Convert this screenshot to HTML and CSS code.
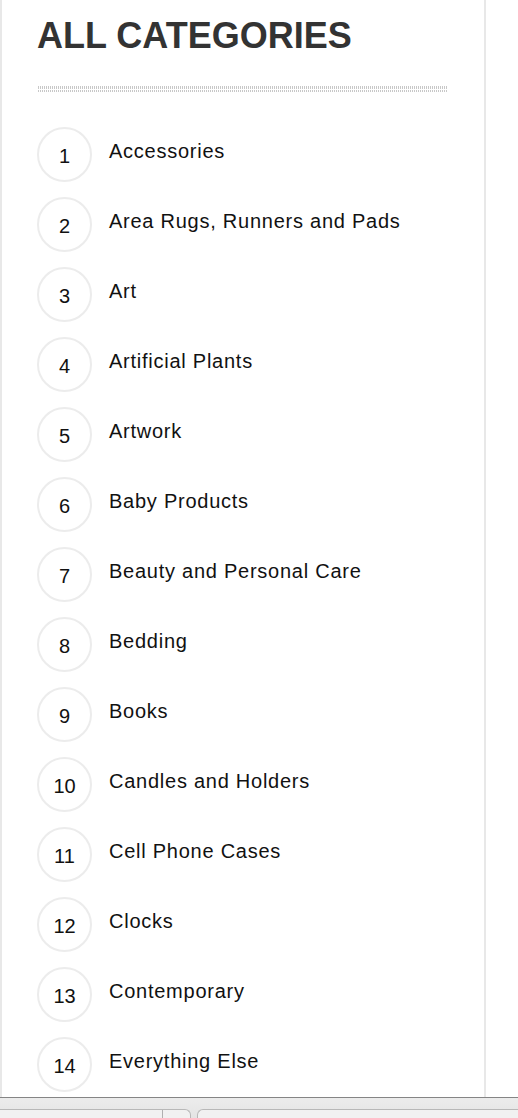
FILE: index.html
```html
<!DOCTYPE html>
<html>
<head>
<meta charset="utf-8">
<link rel="stylesheet" href="styles.css">
</head>
<body>
<div class="page">
  <div class="panel">
    <h1 class="title">ALL CATEGORIES</h1>
    <div class="dots"></div>
    <ul class="list">
      <li class="row"><span class="num">1</span><span class="label">Accessories</span></li>
      <li class="row"><span class="num">2</span><span class="label">Area Rugs, Runners and Pads</span></li>
      <li class="row"><span class="num">3</span><span class="label">Art</span></li>
      <li class="row"><span class="num">4</span><span class="label">Artificial Plants</span></li>
      <li class="row"><span class="num">5</span><span class="label">Artwork</span></li>
      <li class="row"><span class="num">6</span><span class="label">Baby Products</span></li>
      <li class="row"><span class="num">7</span><span class="label">Beauty and Personal Care</span></li>
      <li class="row"><span class="num">8</span><span class="label">Bedding</span></li>
      <li class="row"><span class="num">9</span><span class="label">Books</span></li>
      <li class="row"><span class="num">10</span><span class="label">Candles and Holders</span></li>
      <li class="row"><span class="num">11</span><span class="label">Cell Phone Cases</span></li>
      <li class="row"><span class="num">12</span><span class="label">Clocks</span></li>
      <li class="row"><span class="num">13</span><span class="label">Contemporary</span></li>
      <li class="row"><span class="num">14</span><span class="label">Everything Else</span></li>
    </ul>
  </div>
</div>
<div class="bar">
  <div class="tab tab-left"><span class="divider"></span></div>
  <div class="tab tab-right"></div>
</div>
</body>
</html>
```

FILE: styles.css
```css
html, body {
  margin: 0;
  padding: 0;
  background: #fff;
  font-family: "Liberation Sans", Arial, Helvetica, sans-serif;
}

.page {
  height: 1097px;
  overflow: hidden;
  display: flex;
}

.panel {
  width: 486px;
  box-sizing: border-box;
  border-left: 2px solid #e8e8e8;
  border-right: 2px solid #e8e8e8;
  padding-left: 35px;
}

.title {
  margin: 0;
  padding-top: 15px;
  font-size: 36px;
  line-height: 42px;
  font-weight: bold;
  color: #333;
}

.dots {
  margin-top: 29px;
  width: 410px;
  height: 6px;
  margin-left: 1px;
  background-image:
    linear-gradient(#fff, #fff),
    repeating-linear-gradient(90deg, #c8c8c8 0 1px, transparent 1px 2px);
  background-size: 100% 1px, 100% 100%;
  background-position: 0 3px, 0 0;
  background-repeat: no-repeat, no-repeat;
}

.list {
  list-style: none;
  margin: 35px 0 0 0;
  padding: 0;
}

.row {
  display: flex;
  align-items: flex-start;
  margin-bottom: 15px;
}

.num {
  flex: none;
  width: 55px;
  height: 55px;
  box-sizing: border-box;
  border: 2px solid #ececec;
  border-radius: 50%;
  display: flex;
  align-items: center;
  justify-content: center;
  padding-top: 4px;
  font-size: 20px;
  color: #111;
}

.label {
  margin-left: 17px;
  margin-top: 13px;
  font-size: 20px;
  line-height: 22px;
  letter-spacing: 0.75px;
  color: #111;
}

.bar {
  height: 21px;
  box-sizing: border-box;
  border-top: 1px solid #858585;
  background: linear-gradient(#ececec, #e4e4e4);
  display: flex;
  align-items: flex-end;
  overflow: hidden;
}

.tab {
  height: 8px;
  background: #f1f1f1;
  border-top: 1px solid #b8b8b8;
  position: relative;
}

.tab-left {
  width: 190px;
  border-right: 1px solid #b8b8b8;
  border-top-right-radius: 6px;
}

.tab-right {
  flex: 1;
  margin-left: 6px;
  border-left: 1px solid #b8b8b8;
  border-top-left-radius: 6px;
}

.divider {
  position: absolute;
  left: 162px;
  top: 0;
  bottom: 0;
  width: 1px;
  background: #b0b0b0;
}
```
